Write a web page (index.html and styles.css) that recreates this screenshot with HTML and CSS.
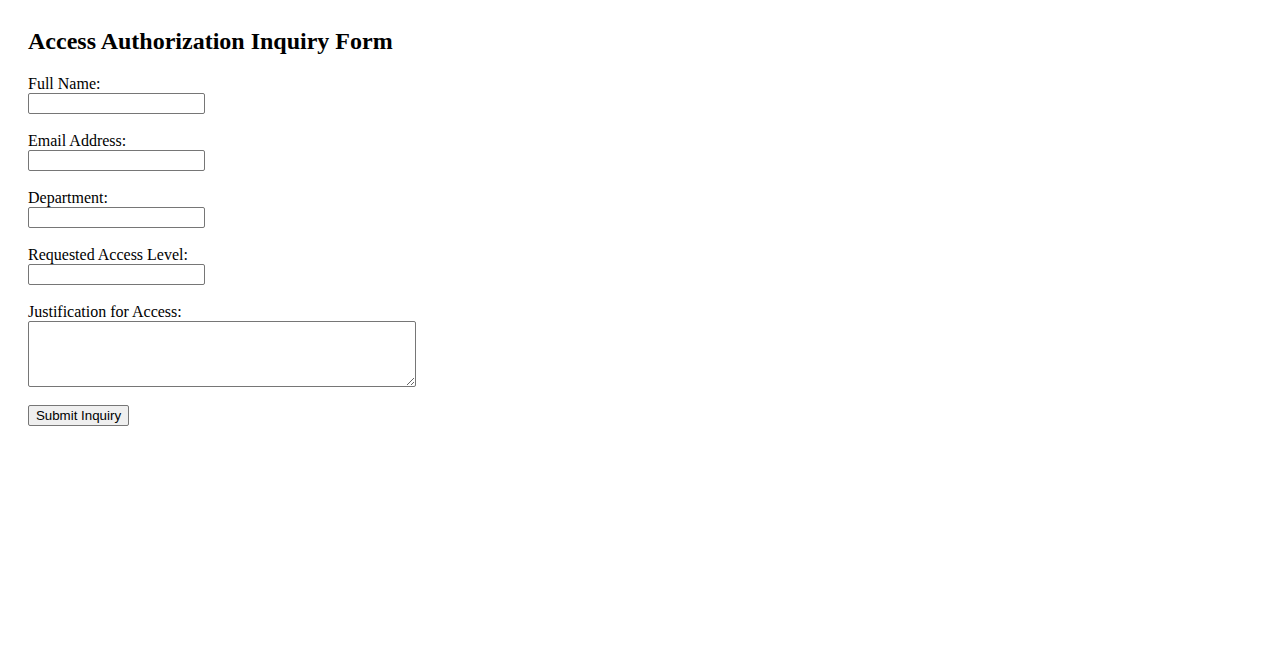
FILE: index.html
```html
<!DOCTYPE html>
<html lang="en">
<head>
<meta charset="utf-8">
<title>Access Authorization Inquiry Form</title>
<link rel="stylesheet" href="styles.css">
</head>
<body>
<main class="page">
  <h2 class="title">Access Authorization Inquiry Form</h2>
  <form class="form">
    <div class="field">
      <label class="label" for="name">Full Name:</label>
      <input class="input" id="name" type="text">
    </div>
    <div class="field">
      <label class="label" for="email">Email Address:</label>
      <input class="input" id="email" type="email">
    </div>
    <div class="field">
      <label class="label" for="dept">Department:</label>
      <input class="input" id="dept" type="text">
    </div>
    <div class="field">
      <label class="label" for="level">Requested Access Level:</label>
      <input class="input" id="level" type="text">
    </div>
    <div class="field">
      <label class="label" for="just">Justification for Access:</label>
      <textarea class="textarea" id="just"></textarea>
    </div>
    <div class="actions">
      <button class="button" type="submit">Submit Inquiry</button>
    </div>
  </form>
</main>
</body>
</html>
```

FILE: styles.css
```css
html, body {
  margin: 0;
  padding: 0;
  background: #ffffff;
}
body {
  font-family: "Liberation Serif", "Times New Roman", serif;
  font-size: 16px;
  color: #000000;
}
.page {
  padding: 28px;
}
.title {
  font-size: 24px;
  font-weight: bold;
  line-height: 27px;
  margin: 0 0 20px 0;
}
.form {
  display: flex;
  flex-direction: column;
  align-items: flex-start;
}
.field {
  display: flex;
  flex-direction: column;
  align-items: flex-start;
  margin-bottom: 18px;
}
.label {
  line-height: 18px;
}
.input {
  box-sizing: border-box;
  width: 177px;
  height: 21px;
  margin: 0;
  padding: 1px 2px;
  border: 1px solid #767676;
  border-radius: 2px;
  font-family: "Liberation Sans", Arial, sans-serif;
  font-size: 13.33px;
  background: #ffffff;
}
.textarea {
  box-sizing: border-box;
  width: 388px;
  height: 66px;
  margin: 0;
  padding: 2px;
  border: 1px solid #767676;
  border-radius: 2px;
  font-family: "Liberation Mono", monospace;
  font-size: 13.33px;
  resize: both;
  background: #ffffff;
}
.button {
  box-sizing: border-box;
  height: 21px;
  width: 101px;
  margin: 0;
  padding: 1px 6px;
  border: 1px solid #767676;
  border-radius: 2px;
  background: #efefef;
  color: #000000;
  font-family: "Liberation Sans", Arial, sans-serif;
  font-size: 13.33px;
  line-height: 17px;
}
```
